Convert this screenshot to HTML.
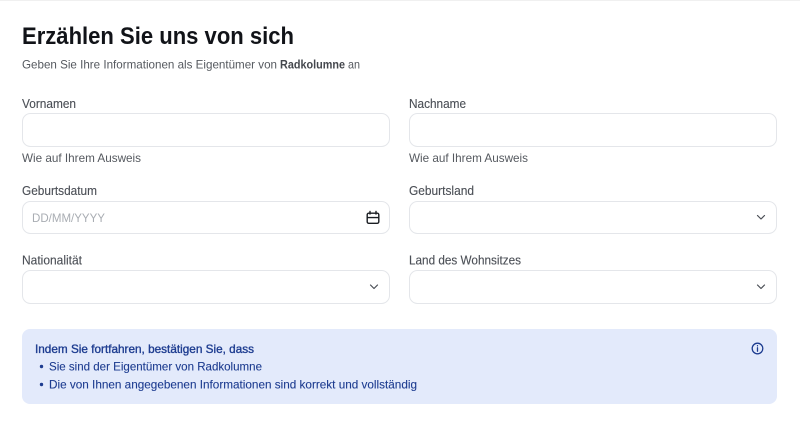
<!DOCTYPE html>
<html lang="de">
<head>
<meta charset="utf-8">
<title>Erzählen Sie uns von sich</title>
<style>
html,body{margin:0;padding:0;background:#fff;width:800px;height:433px;overflow:hidden}
svg{display:block}
text{font-family:"Liberation Sans",sans-serif;}
.l{font-size:12.5px;fill:#4b4f56;stroke:#4b4f56;stroke-width:.12px}
.h{font-size:12px;fill:#55595f}
.b{font-size:12px;fill:#1d3c90;stroke:#1d3c90;stroke-width:.1px}
.s{stroke-width:.35px}
rect.i{fill:#fff;stroke:#e4e6ea;stroke-width:1}
</style>
</head>
<body>
<svg width="800" height="433" viewBox="0 0 800 433" xmlns="http://www.w3.org/2000/svg">
<rect x="0" y="0" width="800" height="1" fill="#f0f0f0"/>
<text x="22" y="44" font-size="24" font-weight="700" fill="#111318" textLength="272" lengthAdjust="spacingAndGlyphs">Erzählen Sie uns von sich</text>
<text x="22" y="68.5" class="h" textLength="255" lengthAdjust="spacingAndGlyphs">Geben Sie Ihre Informationen als Eigentümer von</text>
<text x="280" y="68.5" class="h" font-weight="700" style="fill:#44474d" textLength="65" lengthAdjust="spacingAndGlyphs">Radkolumne</text>
<text x="348" y="68.5" class="h" textLength="12" lengthAdjust="spacingAndGlyphs">an</text>

<text x="22" y="108" class="l" textLength="54" lengthAdjust="spacingAndGlyphs">Vornamen</text>
<rect class="i" x="22.5" y="113.5" width="367" height="33" rx="8"/>
<text x="22" y="162" class="h" textLength="119" lengthAdjust="spacingAndGlyphs">Wie auf Ihrem Ausweis</text>

<text x="409" y="108" class="l" textLength="57" lengthAdjust="spacingAndGlyphs">Nachname</text>
<rect class="i" x="409.5" y="113.5" width="367" height="33" rx="8"/>
<text x="409" y="162" class="h" textLength="119" lengthAdjust="spacingAndGlyphs">Wie auf Ihrem Ausweis</text>

<text x="22" y="195" class="l" textLength="75" lengthAdjust="spacingAndGlyphs">Geburtsdatum</text>
<rect class="i" x="22.5" y="201.5" width="367" height="32" rx="8"/>
<text x="32" y="222" font-size="12" fill="#a9adb3" textLength="73" lengthAdjust="spacingAndGlyphs">DD/MM/YYYY</text>
<g fill="none" stroke="#1a1d22" stroke-width="1.4" stroke-linecap="round" stroke-linejoin="round">
<rect x="367.2" y="213.2" width="11.6" height="10.1" rx="1.6"/>
<path d="M367.2 217.6H378.800M370 211.5V214M376 211.500V214"/>
</g>

<text x="409" y="195" class="l" textLength="65" lengthAdjust="spacingAndGlyphs">Geburtsland</text>
<rect class="i" x="409.5" y="201.5" width="367" height="32" rx="8"/>
<path d="M757.500 215.500L761 219L764.500 215.500" fill="none" stroke="#4b4f56" stroke-width="1.2" stroke-linecap="round" stroke-linejoin="round"/>

<text x="22" y="264.500" class="l" textLength="60" lengthAdjust="spacingAndGlyphs">Nationalität</text>
<rect class="i" x="22.5" y="270.5" width="367" height="33" rx="8"/>
<path d="M370.500 285L374 288.500L377.500 285" fill="none" stroke="#4b4f56" stroke-width="1.2" stroke-linecap="round" stroke-linejoin="round"/>

<text x="409" y="264.500" class="l" textLength="112" lengthAdjust="spacingAndGlyphs">Land des Wohnsitzes</text>
<rect class="i" x="409.5" y="270.5" width="367" height="33" rx="8"/>
<path d="M757.500 285L761 288.500L764.500 285" fill="none" stroke="#4b4f56" stroke-width="1.2" stroke-linecap="round" stroke-linejoin="round"/>

<rect x="22" y="329" width="755" height="75" rx="8" fill="#e3eafb"/>
<text x="35" y="353" class="b s" textLength="219" lengthAdjust="spacingAndGlyphs">Indem Sie fortfahren, bestätigen Sie, dass</text>
<circle cx="41.500" cy="366.500" r="1.7" fill="#1d3c90"/>
<text x="49" y="370.500" class="b" textLength="213" lengthAdjust="spacingAndGlyphs">Sie sind der Eigentümer von Radkolumne</text>
<circle cx="41.500" cy="384.500" r="1.7" fill="#1d3c90"/>
<text x="49" y="388.500" class="b" textLength="368" lengthAdjust="spacingAndGlyphs">Die von Ihnen angegebenen Informationen sind korrekt und vollständig</text>
<circle cx="757.500" cy="348.500" r="5.300" fill="none" stroke="#1d3c90" stroke-width="1.3"/>
<path d="M757.500 347.800V351.200M757.500 345.600V345.900" fill="none" stroke="#1d3c90" stroke-width="1.3" stroke-linecap="round"/>
</svg>
</body>
</html>
